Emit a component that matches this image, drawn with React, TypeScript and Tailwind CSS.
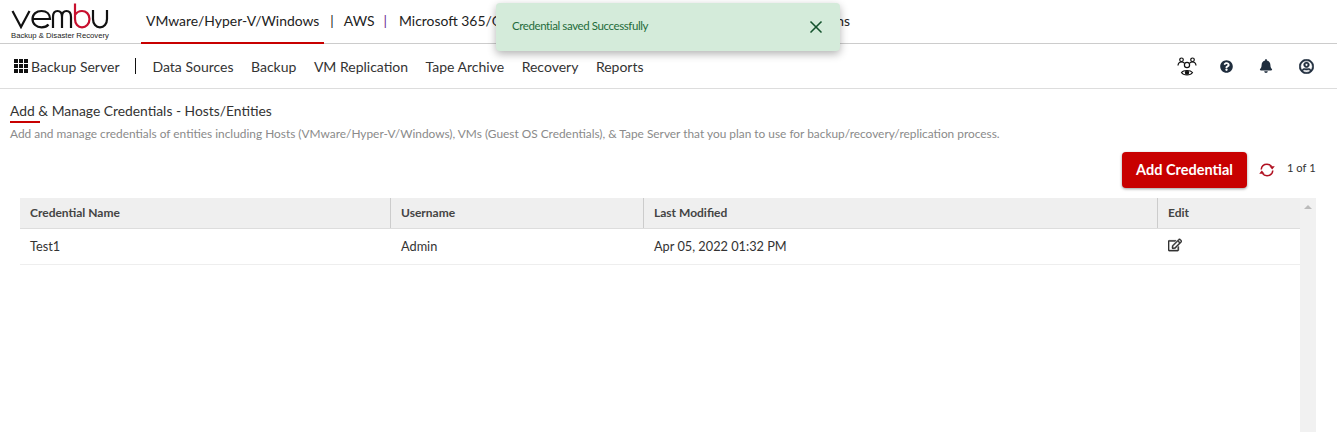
import { Fragment } from "react";
import { FaRegEdit, FaQuestionCircle, FaBell, FaRegUserCircle } from "react-icons/fa";
import { X } from "lucide-react";

const TABS = ["VMware/Hyper-V/Windows", "AWS", "Microsoft 365/Google Workspace", "Endpoints", "Applications"];
const MENU = ["Data Sources", "Backup", "VM Replication", "Tape Archive", "Recovery", "Reports"];

function Logo() {
  return (
    <div className="flex w-[98px] flex-col">
      <svg width="98" height="26" viewBox="0 0 98 26" fill="none" strokeWidth="2.2" className="block">
        <path d="M1.5 8 L10 24 L18.5 8" stroke="#111" />
        <path d="M21.5 16 H39 C39 11 35.5 8 30.5 8 C25.5 8 21.5 11 21.5 16 C21.5 21 25.5 24.3 30.5 24.3 C33.5 24.3 36 23.4 37.5 21.5" stroke="#111" />
        <path d="M42 25 V14 C42 10 44 8 46.5 8 C49 8 51 10 51 14 V25 M51 14 C51 10 53 8 55.5 8 C58 8 60 10 60 14 V25" stroke="#111" />
        <path d="M64 0.5 V16 C64 21 67 24.3 71 24.3 C75 24.3 78.5 21 78.5 16 C78.5 11 75 8 71 8 C68 8 65.5 9.5 64 12" stroke="#c8102e" />
        <path d="M82 7 V16 C82 21 85 24.3 89 24.3 C93 24.3 96 21 96 16 V7" stroke="#111" />
      </svg>
      <span className="mt-[2px] whitespace-nowrap font-['Liberation_Sans',sans-serif] text-[7.7px] leading-[9px] text-[#222]">
        Backup &amp; Disaster Recovery
      </span>
    </div>
  );
}

function TeamIcon() {
  return (
    <svg width="20" height="20" viewBox="0 0 20 20" fill="none" stroke="#111" strokeWidth="1.2">
      <circle cx="4.5" cy="2.8" r="1.8" />
      <circle cx="15.5" cy="2.8" r="1.8" />
      <circle cx="10" cy="8" r="2.6" />
      <path d="M1 8.5 C1.2 6 3 5 4.5 5 C5.5 5 6.5 5.3 7.3 6" />
      <path d="M19 8.5 C18.8 6 17 5 15.5 5 C14.5 5 13.5 5.3 12.7 6" />
      <path d="M4.5 15.5 C6.5 12.8 13.5 12.8 15.5 15.5 C13.5 18.8 6.5 18.8 4.5 15.5 Z" />
      <circle cx="10" cy="15.6" r="1.6" fill="#111" />
    </svg>
  );
}

function SyncIcon() {
  return (
    <svg width="16" height="14" viewBox="0 0 16 14" fill="none" stroke="#b01020" strokeWidth="1.5">
      <path d="M2.2 6.5 C2.6 3.2 5 1.3 8 1.3 C10 1.3 11.6 2.2 12.6 3.6" />
      <path d="M13.8 7.5 C13.4 10.8 11 12.7 8 12.7 C6 12.7 4.4 11.8 3.4 10.4" />
      <path d="M15.8 3.2 L10.4 3.2 L13.2 6.4 Z" fill="#b01020" stroke="none" />
      <path d="M0.2 10.8 L5.6 10.8 L2.8 7.6 Z" fill="#b01020" stroke="none" />
    </svg>
  );
}

export default function App() {
  return (
    <div className="relative h-[432px] w-[1337px] overflow-hidden bg-white font-['Lato',sans-serif] text-[#333]">
      <header className="flex h-[44px] border-b border-[#ccc] pl-[11px]">
        <div className="w-[130px] pt-[3px]">
          <Logo />
        </div>
        <nav className="flex h-[44px] w-[709px] items-start text-[13.92px] text-[#222]">
          {TABS.map((tab, i) => (
            <Fragment key={tab}>
              {i > 0 && i < 4 && (
                <span className={`pt-[11px] leading-[20px] ${i === 2 ? "pr-[12px] pl-[9px] text-[#6b2c8f]" : "pr-[10px] pl-[6px]"}`}>|</span>
              )}
              <a
                className={`h-[44px] whitespace-nowrap pt-[11px] leading-[20px] ${i === 0 ? "border-b-2 border-[#c80000] px-[5px]" : ""} ${i === 4 ? "ml-auto" : ""}`}
              >
                {tab}
              </a>
            </Fragment>
          ))}
        </nav>
      </header>

      <div className="flex h-[45px] items-center border-b border-[#ddd] pr-[23px] pl-[14px] text-[14px] text-[#333]">
        <div className="grid size-[14px] grid-cols-3 gap-[1px]">
          {Array.from({ length: 9 }).map((_, i) => (
            <span key={i} className="bg-[#111]" />
          ))}
        </div>
        <span className="ml-[3px]">Backup Server</span>
        <span className="ml-[15px] h-[16px] w-px bg-[#111]" />
        <nav className="ml-[17px] flex gap-[17.5px]">
          {MENU.map((item) => (
            <a key={item}>{item}</a>
          ))}
        </nav>
        <div className="ml-auto flex items-center gap-[26px] text-[#1f2d3d]">
          <span className="mr-[-3px] translate-y-[1px]">
            <TeamIcon />
          </span>
          <FaQuestionCircle size={13} />
          <FaBell size={14} />
          <FaRegUserCircle size={15} stroke="currentColor" strokeWidth={20} />
        </div>
      </div>

      <main className="pt-[13px]">
        <div className="pl-[10px]">
          <h1 className="text-[13.85px] leading-[18px] text-[#333]">Add &amp; Manage Credentials - Hosts/Entities</h1>
          <div className="mt-[1px] h-[2px] w-[30px] bg-[#c80000]" />
          <p className="mt-[3px] text-[11.88px] leading-[16px] text-[#8a8a8a]">
            Add and manage credentials of entities including Hosts (VMware/Hyper-V/Windows), VMs (Guest OS Credentials), &amp; Tape Server that you plan to use for backup/recovery/replication process.
          </p>
        </div>

        <div className="mt-[10px] flex h-[36px] items-center pl-[1122px]">
          <button className="h-[36px] w-[125px] rounded-[4px] bg-[#c80000] text-[14.5px] font-bold text-white shadow-[0_1px_3px_rgba(0,0,0,0.4)]">
            Add Credential
          </button>
          <span className="ml-[12px]">
            <SyncIcon />
          </span>
          <span className="ml-[12px] -translate-y-[2px] text-[11.2px] text-[#333]">1 of 1</span>
        </div>

        <div className="mt-[10px] ml-[20px] flex w-[1296px]">
          <div className="w-[1280px] text-[12.75px]">
            <div className="flex h-[31px] items-center border-b border-[#ddd] bg-[#efefef] text-[12px] font-bold text-[#444] [&>div]:h-full [&>div]:pt-[6px] [&>div]:pl-[10px]">
              <div className="w-[371px] border-r border-[#ccc]">Credential Name</div>
              <div className="w-[253px] border-r border-[#ccc]">Username</div>
              <div className="w-[514px] border-r border-[#ccc]">Last Modified</div>
              <div className="flex-1">Edit</div>
            </div>
            <div className="flex h-[36px] items-center border-b border-[#eee] text-[#333] [&>div]:pl-[10px]">
              <div className="w-[371px]">Test1</div>
              <div className="w-[253px]">Admin</div>
              <div className="w-[514px]">Apr 05, 2022 01:32 PM</div>
              <div className="flex-1 -translate-y-[2px]">
                <FaRegEdit size={14} stroke="currentColor" strokeWidth={15} />
              </div>
            </div>
          </div>
          <div className="flex h-[240px] w-[16px] justify-center bg-[#f1f1f1] pt-[7px]">
            <span className="h-0 w-0 border-x-[4px] border-b-[4px] border-x-transparent border-b-[#bbb]" />
          </div>
        </div>
      </main>

      <div className="absolute top-[3px] left-[496px] flex h-[48px] w-[344px] items-center justify-between rounded-[4px] bg-[#d4ebda] pr-[14px] pl-[16px] text-[11.5px] tracking-[-0.4px] text-[#1f6b3a] shadow-[0_3px_8px_rgba(0,0,0,0.3)]">
        <span className="-translate-y-[1px]">Credential saved Successfully</span>
        <X size={20} strokeWidth={2} className="text-[#14532d]" />
      </div>
    </div>
  );
}
